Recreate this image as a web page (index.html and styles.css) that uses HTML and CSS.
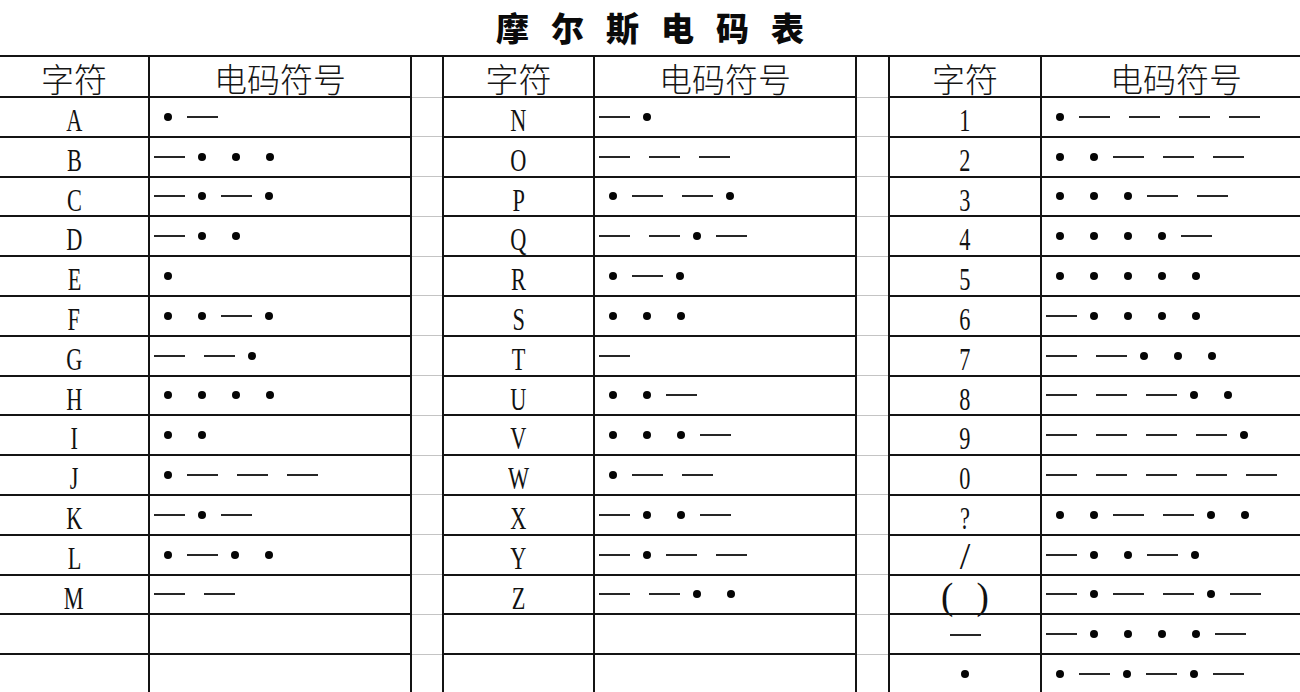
FILE: index.html
```html
<!DOCTYPE html>
<html lang="zh-CN">
<head>
<meta charset="utf-8">
<title>摩尔斯电码表</title>
<link rel="stylesheet" href="styles.css">
</head>
<body>
<h1 class="title">摩尔斯电码表</h1>
<table class="morse">
<colgroup>
<col class="w-ch1"><col class="w-code"><col class="w-gap1">
<col class="w-ch2"><col class="w-code"><col class="w-gap2">
<col class="w-ch3"><col class="w-code-last">
</colgroup>
<thead>
<tr class="head">
<th class="hc">字符</th><th class="hc">电码符号</th><th class="gap"></th>
<th class="hc">字符</th><th class="hc">电码符号</th><th class="gap"></th>
<th class="hc">字符</th><th class="hc">电码符号</th>
</tr>
</thead>
<tbody>
<tr>
<td class="ch"><span class="g">A</span></td><td class="code"><div class="m"><i class="dot"></i><i class="dash"></i></div></td><td class="gap"></td>
<td class="ch"><span class="g">N</span></td><td class="code"><div class="m"><i class="dash"></i><i class="dot"></i></div></td><td class="gap"></td>
<td class="ch"><span class="g">1</span></td><td class="code"><div class="m"><i class="dot"></i><i class="dash"></i><i class="dash"></i><i class="dash"></i><i class="dash"></i></div></td>
</tr>
<tr>
<td class="ch"><span class="g">B</span></td><td class="code"><div class="m"><i class="dash"></i><i class="dot"></i><i class="dot"></i><i class="dot"></i></div></td><td class="gap"></td>
<td class="ch"><span class="g">O</span></td><td class="code"><div class="m"><i class="dash"></i><i class="dash"></i><i class="dash"></i></div></td><td class="gap"></td>
<td class="ch"><span class="g">2</span></td><td class="code"><div class="m"><i class="dot"></i><i class="dot"></i><i class="dash"></i><i class="dash"></i><i class="dash"></i></div></td>
</tr>
<tr>
<td class="ch"><span class="g">C</span></td><td class="code"><div class="m"><i class="dash"></i><i class="dot"></i><i class="dash"></i><i class="dot"></i></div></td><td class="gap"></td>
<td class="ch"><span class="g">P</span></td><td class="code"><div class="m"><i class="dot"></i><i class="dash"></i><i class="dash"></i><i class="dot"></i></div></td><td class="gap"></td>
<td class="ch"><span class="g">3</span></td><td class="code"><div class="m"><i class="dot"></i><i class="dot"></i><i class="dot"></i><i class="dash"></i><i class="dash"></i></div></td>
</tr>
<tr>
<td class="ch"><span class="g">D</span></td><td class="code"><div class="m"><i class="dash"></i><i class="dot"></i><i class="dot"></i></div></td><td class="gap"></td>
<td class="ch"><span class="g">Q</span></td><td class="code"><div class="m"><i class="dash"></i><i class="dash"></i><i class="dot"></i><i class="dash"></i></div></td><td class="gap"></td>
<td class="ch"><span class="g">4</span></td><td class="code"><div class="m"><i class="dot"></i><i class="dot"></i><i class="dot"></i><i class="dot"></i><i class="dash"></i></div></td>
</tr>
<tr>
<td class="ch"><span class="g">E</span></td><td class="code"><div class="m"><i class="dot"></i></div></td><td class="gap"></td>
<td class="ch"><span class="g">R</span></td><td class="code"><div class="m"><i class="dot"></i><i class="dash"></i><i class="dot"></i></div></td><td class="gap"></td>
<td class="ch"><span class="g">5</span></td><td class="code"><div class="m"><i class="dot"></i><i class="dot"></i><i class="dot"></i><i class="dot"></i><i class="dot"></i></div></td>
</tr>
<tr>
<td class="ch"><span class="g">F</span></td><td class="code"><div class="m"><i class="dot"></i><i class="dot"></i><i class="dash"></i><i class="dot"></i></div></td><td class="gap"></td>
<td class="ch"><span class="g">S</span></td><td class="code"><div class="m"><i class="dot"></i><i class="dot"></i><i class="dot"></i></div></td><td class="gap"></td>
<td class="ch"><span class="g">6</span></td><td class="code"><div class="m"><i class="dash"></i><i class="dot"></i><i class="dot"></i><i class="dot"></i><i class="dot"></i></div></td>
</tr>
<tr>
<td class="ch"><span class="g">G</span></td><td class="code"><div class="m"><i class="dash"></i><i class="dash"></i><i class="dot"></i></div></td><td class="gap"></td>
<td class="ch"><span class="g">T</span></td><td class="code"><div class="m"><i class="dash"></i></div></td><td class="gap"></td>
<td class="ch"><span class="g">7</span></td><td class="code"><div class="m"><i class="dash"></i><i class="dash"></i><i class="dot"></i><i class="dot"></i><i class="dot"></i></div></td>
</tr>
<tr>
<td class="ch"><span class="g">H</span></td><td class="code"><div class="m"><i class="dot"></i><i class="dot"></i><i class="dot"></i><i class="dot"></i></div></td><td class="gap"></td>
<td class="ch"><span class="g">U</span></td><td class="code"><div class="m"><i class="dot"></i><i class="dot"></i><i class="dash"></i></div></td><td class="gap"></td>
<td class="ch"><span class="g">8</span></td><td class="code"><div class="m"><i class="dash"></i><i class="dash"></i><i class="dash"></i><i class="dot"></i><i class="dot"></i></div></td>
</tr>
<tr>
<td class="ch"><span class="g">I</span></td><td class="code"><div class="m"><i class="dot"></i><i class="dot"></i></div></td><td class="gap"></td>
<td class="ch"><span class="g">V</span></td><td class="code"><div class="m"><i class="dot"></i><i class="dot"></i><i class="dot"></i><i class="dash"></i></div></td><td class="gap"></td>
<td class="ch"><span class="g">9</span></td><td class="code"><div class="m"><i class="dash"></i><i class="dash"></i><i class="dash"></i><i class="dash"></i><i class="dot"></i></div></td>
</tr>
<tr>
<td class="ch"><span class="g">J</span></td><td class="code"><div class="m"><i class="dot"></i><i class="dash"></i><i class="dash"></i><i class="dash"></i></div></td><td class="gap"></td>
<td class="ch"><span class="g">W</span></td><td class="code"><div class="m"><i class="dot"></i><i class="dash"></i><i class="dash"></i></div></td><td class="gap"></td>
<td class="ch"><span class="g">0</span></td><td class="code"><div class="m"><i class="dash"></i><i class="dash"></i><i class="dash"></i><i class="dash"></i><i class="dash"></i></div></td>
</tr>
<tr>
<td class="ch"><span class="g">K</span></td><td class="code"><div class="m"><i class="dash"></i><i class="dot"></i><i class="dash"></i></div></td><td class="gap"></td>
<td class="ch"><span class="g">X</span></td><td class="code"><div class="m"><i class="dash"></i><i class="dot"></i><i class="dot"></i><i class="dash"></i></div></td><td class="gap"></td>
<td class="ch"><span class="g">?</span></td><td class="code"><div class="m"><i class="dot"></i><i class="dot"></i><i class="dash"></i><i class="dash"></i><i class="dot"></i><i class="dot"></i></div></td>
</tr>
<tr>
<td class="ch"><span class="g">L</span></td><td class="code"><div class="m"><i class="dot"></i><i class="dash"></i><i class="dot"></i><i class="dot"></i></div></td><td class="gap"></td>
<td class="ch"><span class="g">Y</span></td><td class="code"><div class="m"><i class="dash"></i><i class="dot"></i><i class="dash"></i><i class="dash"></i></div></td><td class="gap"></td>
<td class="ch"><span class="slash">/</span></td><td class="code"><div class="m"><i class="dash"></i><i class="dot"></i><i class="dot"></i><i class="dash"></i><i class="dot"></i></div></td>
</tr>
<tr>
<td class="ch"><span class="g">M</span></td><td class="code"><div class="m"><i class="dash"></i><i class="dash"></i></div></td><td class="gap"></td>
<td class="ch"><span class="g">Z</span></td><td class="code"><div class="m"><i class="dash"></i><i class="dash"></i><i class="dot"></i><i class="dot"></i></div></td><td class="gap"></td>
<td class="ch"><span class="paren">( )</span></td><td class="code"><div class="m"><i class="dash"></i><i class="dot"></i><i class="dash"></i><i class="dash"></i><i class="dot"></i><i class="dash"></i></div></td>
</tr>
<tr>
<td class="ch"></td><td class="code"></td><td class="gap"></td>
<td class="ch"></td><td class="code"></td><td class="gap"></td>
<td class="ch mid"><i class="dash"></i></td><td class="code"><div class="m"><i class="dash"></i><i class="dot"></i><i class="dot"></i><i class="dot"></i><i class="dot"></i><i class="dash"></i></div></td>
</tr>
<tr>
<td class="ch"></td><td class="code"></td><td class="gap"></td>
<td class="ch"></td><td class="code"></td><td class="gap"></td>
<td class="ch mid"><i class="dot"></i></td><td class="code"><div class="m"><i class="dot"></i><i class="dash"></i><i class="dot"></i><i class="dash"></i><i class="dot"></i><i class="dash"></i></div></td>
</tr>
</tbody>
</table>
</body>
</html>
```

FILE: styles.css
```css
html, body {
  margin: 0;
  padding: 0;
  background: #ffffff;
  overflow: hidden;
}

body {
  width: 1300px;
  height: 692px;
  font-family: "Liberation Serif", "Noto Sans CJK SC", serif;
  color: #111111;
}

.title {
  margin: 0;
  height: 55px;
  line-height: 55px;
  text-align: center;
  font-family: "Noto Sans CJK SC", sans-serif;
  font-weight: 900;
  font-size: 33px;
  letter-spacing: 22px;
  padding-left: 22px;
  color: #0a0a0a;
}

.morse {
  border-collapse: collapse;
  table-layout: fixed;
  width: 1311px;
}

.w-ch1 { width: 149px; }
.w-code { width: 262px; }
.w-gap1 { width: 32px; }
.w-ch2 { width: 151px; }
.w-gap2 { width: 33px; }
.w-ch3 { width: 152px; }
.w-code-last { width: 270px; }

.morse th,
.morse td {
  border: 2px solid #141414;
  padding: 0;
}

.morse tr > :first-child {
  border-left: none;
}

.head {
  height: 41px;
}

.morse tbody tr {
  height: 39.8px;
}

.morse .hc {
  font-family: "Noto Sans CJK SC", sans-serif;
  font-weight: 300;
  font-size: 33px;
  line-height: 30px;
  vertical-align: top;
  padding-top: 6px;
  text-align: center;
  color: #161616;
}

.morse .gap {
  border-top: 1px solid #c4c4c4;
  border-bottom: 1px solid #c4c4c4;
}

.morse th.gap {
  border-top: 2px solid #141414;
}

.morse .ch {
  text-align: center;
  vertical-align: top;
  padding-top: 13px;
  font-size: 31px;
  line-height: 20px;
}

.g {
  display: inline-block;
  transform: scaleX(0.72);
}

.slash {
  display: inline-block;
  font-size: 38px;
  line-height: 15px;
}

.paren {
  display: inline-block;
  font-size: 37px;
  line-height: 15px;
  word-spacing: 14px;
  vertical-align: 2px;
}

.morse .ch.mid {
  vertical-align: middle;
  padding-top: 0;
  line-height: 0;
}

.ch.mid .dot,
.ch.mid .dash {
  display: inline-block;
  vertical-align: middle;
}

.code {
  vertical-align: middle;
}

.m {
  display: flex;
  align-items: center;
  padding-left: 4px;
}

.dot {
  display: block;
  flex: none;
  width: 8px;
  height: 8px;
  border-radius: 50%;
  background: #050505;
}

.dash {
  display: block;
  flex: none;
  width: 31px;
  height: 2px;
  background: #262626;
}

.m > .dot:first-child { margin-left: 10px; }
.dot + .dot { margin-left: 26px; }
.dot + .dash { margin-left: 15px; }
.dash + .dash { margin-left: 19px; }
.dash + .dot { margin-left: 13px; }
```
